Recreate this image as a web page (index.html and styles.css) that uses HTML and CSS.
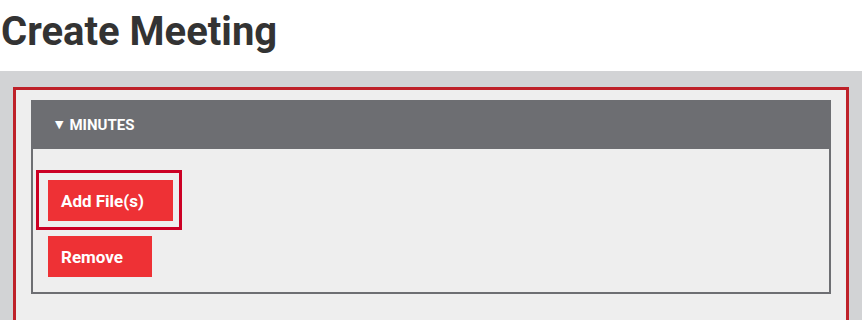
FILE: index.html
```html
<!DOCTYPE html>
<html lang="en">
<head>
<meta charset="utf-8">
<title>Create Meeting</title>
<link rel="stylesheet" href="styles.css">
</head>
<body>
<h1 class="page-title">Create Meeting</h1>
<section class="band">
  <div class="frame">
    <div class="panel">
      <div class="panel-header"><span class="caret">&#9660;</span>MINUTES</div>
      <div class="panel-body">
        <div class="focus-ring"><button class="btn" type="button">Add File(s)</button></div>
        <button class="btn btn-remove" type="button">Remove</button>
      </div>
    </div>
  </div>
</section>
</body>
</html>
```
FILE: styles.css
```css
html, body {
  margin: 0;
  padding: 0;
  background: #ffffff;
  font-family: Roboto, "Liberation Sans", Arial, sans-serif;
  overflow: hidden;
}

.page-title {
  margin: 0;
  padding: 8px 0 0 1px;
  height: 71px;
  box-sizing: border-box;
  font-size: 40px;
  line-height: 47px;
  font-weight: 700;
  color: #333333;
}

.band {
  background: #d2d3d5;
  padding: 16px 13px 0 13px;
  height: calc(100vh - 71px);
  box-sizing: border-box;
}

.frame {
  border: 3px solid #be2129;
  border-bottom: none;
  background: #eeeeee;
  padding: 10px 15px 0 15px;
  height: 100%;
  box-sizing: border-box;
}

.panel-header {
  background: #6d6e72;
  color: #ffffff;
  height: 49px;
  box-sizing: border-box;
  padding: 0 0 0 24px;
  display: flex;
  align-items: center;
  font-size: 15px;
  font-weight: 700;
}

.caret {
  font-size: 11px;
  margin-right: 6px;
  font-family: "DejaVu Sans", sans-serif;
}

.panel-body {
  border: 2px solid #6d6e72;
  border-top: none;
  background: #eeeeee;
  padding: 21px 0 15px 3px;
  display: flex;
  flex-direction: column;
  align-items: flex-start;
}

.focus-ring {
  border: 3px solid #cc0024;
  padding: 7px 6px 6px 9px;
}

.btn {
  display: block;
  border: none;
  margin: 0;
  background: #ee3135;
  color: #ffffff;
  font-family: Roboto, "Liberation Sans", Arial, sans-serif;
  font-size: 17px;
  font-weight: 700;
  height: 41px;
  padding: 0 13px;
  text-align: left;
}

.focus-ring .btn {
  width: 125px;
}

.btn-remove {
  width: 104px;
  margin: 6px 0 0 12px;
}
```
